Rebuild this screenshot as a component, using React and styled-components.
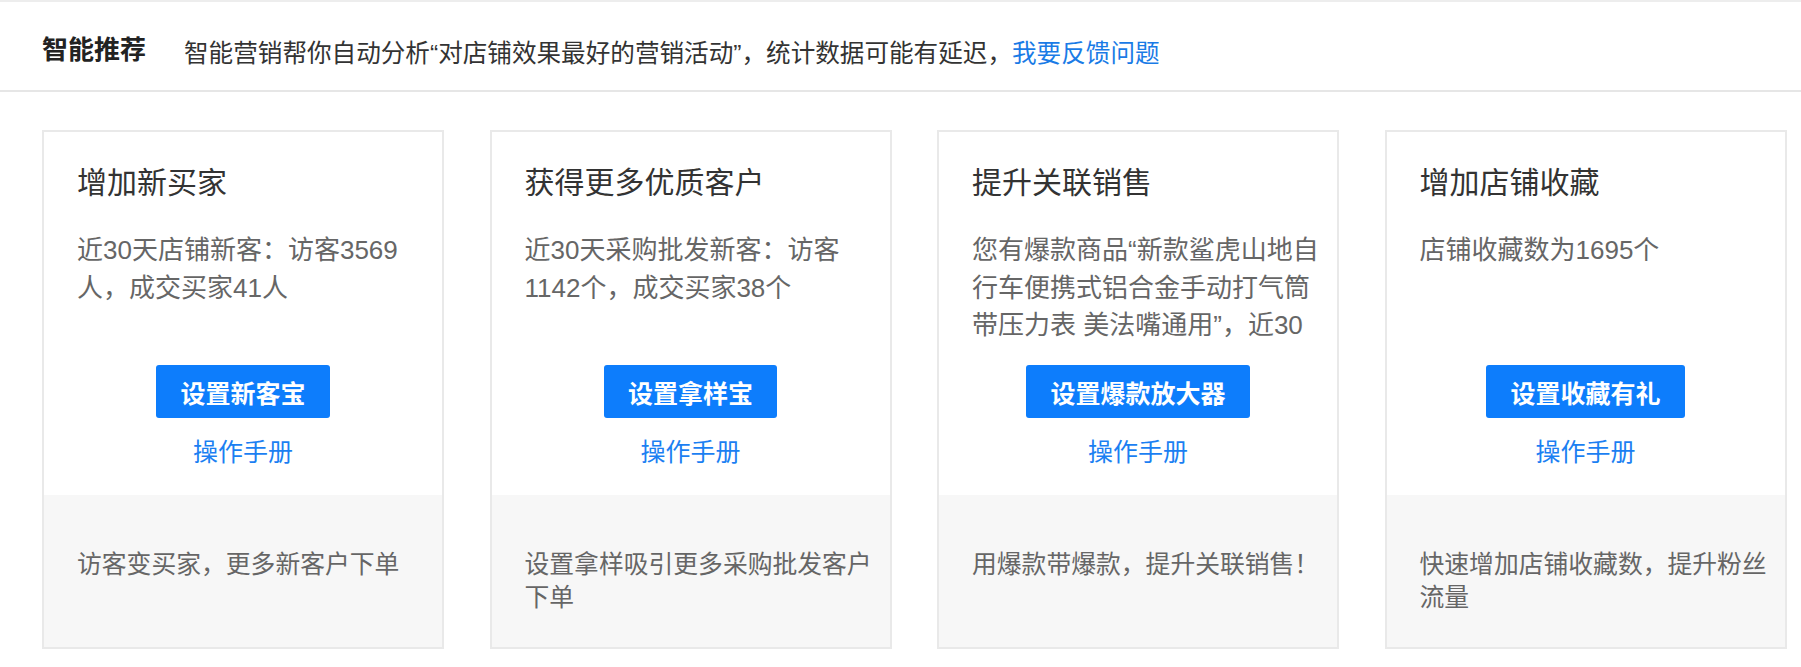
import React from "react";
import styled, { createGlobalStyle } from "styled-components";

const GlobalStyle = createGlobalStyle`
  body {
    margin: 0;
    background: #fff;
    font-family: "Liberation Sans", "Noto Sans CJK SC", sans-serif;
  }
`;

const Page = styled.div`
  width: 1801px;
  background: #fff;
`;

const Header = styled.div`
  display: flex;
  align-items: flex-start;
  height: 92px;
  box-sizing: border-box;
  padding: 31px 0 0 42px;
  border-top: 2px solid #ededed;
  border-bottom: 2px solid #e6e6e6;
`;

const HeaderTitle = styled.h2`
  margin: 0 38px 0 0;
  font-size: 26px;
  line-height: 34px;
  font-weight: bold;
  color: #222;
`;

const HeaderDesc = styled.p`
  margin: 4px 0 0;
  font-size: 24.6px;
  line-height: 34px;
  color: #333;
`;

const Link = styled.a`
  color: ${(p) => p.color || "#1a7be6"};
  text-decoration: none;
  cursor: pointer;
`;

const CardList = styled.div`
  display: grid;
  grid-template-columns: repeat(4, 402px);
  column-gap: 45.5px;
  padding: 38px 0 0 42px;
`;

const Card = styled.div`
  display: flex;
  flex-direction: column;
  height: 519px;
  box-sizing: border-box;
  border: 2px solid #e9e9e9;
  background: #fff;
`;

const CardTop = styled.div`
  height: 363px;
  box-sizing: border-box;
  padding: 31px 12px 0 33px;
`;

const CardTitle = styled.h3`
  margin: 0;
  font-size: 30px;
  line-height: 40px;
  font-weight: normal;
  color: #333;
`;

const CardBody = styled.div`
  margin-top: 29px;
  height: 113px;
  font-size: 26px;
  line-height: 37.5px;
  color: #666;
`;

const Line = styled.span`
  display: block;
  white-space: nowrap;
`;

const Actions = styled.div`
  display: flex;
  flex-direction: column;
  align-items: center;
  margin: 20px 0 0 -21px;
`;

const Button = styled.button`
  height: 53px;
  padding: 0 24px;
  border: none;
  border-radius: 3px;
  background: #0d7dfc;
  color: #fff;
  font-family: inherit;
  font-size: 25px;
  font-weight: 600;
  cursor: pointer;
`;

const Manual = styled(Link)`
  margin-top: 19px;
  font-size: 25px;
  line-height: 30px;
`;

const CardFooter = styled.div`
  flex: 1;
  padding: 53px 12px 0 33px;
  background: #f7f7f7;
  font-size: 24.8px;
  line-height: 33px;
  color: #666;
`;

const cards = [
  {
    title: "增加新买家",
    body: ["近30天店铺新客：访客3569", "人，成交买家41人"],
    button: "设置新客宝",
    footer: ["访客变买家，更多新客户下单"],
  },
  {
    title: "获得更多优质客户",
    body: ["近30天采购批发新客：访客", "1142个，成交买家38个"],
    button: "设置拿样宝",
    footer: ["设置拿样吸引更多采购批发客户", "下单"],
  },
  {
    title: "提升关联销售",
    body: [
      "您有爆款商品“新款鲨虎山地自",
      "行车便携式铝合金手动打气筒",
      "带压力表 美法嘴通用”，近30",
    ],
    button: "设置爆款放大器",
    footer: ["用爆款带爆款，提升关联销售！"],
  },
  {
    title: "增加店铺收藏",
    body: ["店铺收藏数为1695个"],
    button: "设置收藏有礼",
    footer: ["快速增加店铺收藏数，提升粉丝", "流量"],
  },
];

function RecommendCard({ card }) {
  return (
    <Card>
      <CardTop>
        <CardTitle>{card.title}</CardTitle>
        <CardBody>
          {card.body.map((line, i) => (
            <Line key={i}>{line}</Line>
          ))}
        </CardBody>
        <Actions>
          <Button type="button">{card.button}</Button>
          <Manual color="#1b7ff2">操作手册</Manual>
        </Actions>
      </CardTop>
      <CardFooter>
        {card.footer.map((line, i) => (
          <Line key={i}>{line}</Line>
        ))}
      </CardFooter>
    </Card>
  );
}

export default function App() {
  return (
    <Page>
      <GlobalStyle />
      <Header>
        <HeaderTitle>智能推荐</HeaderTitle>
        <HeaderDesc>
          智能营销帮你自动分析“对店铺效果最好的营销活动”，统计数据可能有延迟，
          <Link>我要反馈问题</Link>
        </HeaderDesc>
      </Header>
      <CardList>
        {cards.map((card) => (
          <RecommendCard key={card.title} card={card} />
        ))}
      </CardList>
    </Page>
  );
}
